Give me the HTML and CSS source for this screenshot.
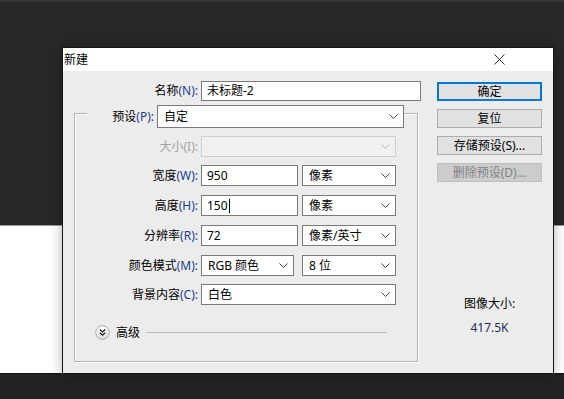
FILE: index.html
```html
<!DOCTYPE html>
<html lang="zh-CN">
<head>
    <meta charset="UTF-8">
    <title>新建</title>
    <link rel="stylesheet" href="styles.css">
</head>
<body>
    <!-- Photoshop workspace behind the dialog -->
    <div class="app-top"></div>
    <div class="workspace"></div>
    <div class="canvas-doc"></div>
    <div class="app-bottom"></div>

    <div class="dialog">
        <div class="title-bar">
            <span class="title">新建</span>
            <svg class="close" width="11" height="11" viewBox="0 0 11 11">
                <path d="M0.5 0.5 L10.5 10.5 M10.5 0.5 L0.5 10.5" stroke="#333" stroke-width="1" fill="none"/>
            </svg>
        </div>

        <div class="dialog-body">
            <div class="main">
                <div class="row name-row">
                    <span class="label">名称<span class="key">(N):</span></span>
                    <div class="field text w-name">未标题-2</div>
                </div>

                <div class="group">
                    <div class="preset-row">
                        <span class="label">预设<span class="key">(P):</span></span>
                        <div class="field select w-preset">
                            <span>自定</span>
                            <svg class="arrow" width="9" height="5" viewBox="0 0 9 5"><path d="M0.5 0.5 L4.5 4.5 L8.5 0.5" fill="none" stroke="#444"/></svg>
                        </div>
                    </div>

                    <div class="row g-row gap8 disabled">
                        <span class="label">大小<span class="key">(I):</span></span>
                        <div class="field select w-full">
                            <span></span>
                            <svg class="arrow" width="9" height="5" viewBox="0 0 9 5"><path d="M0.5 0.5 L4.5 4.5 L8.5 0.5" fill="none" stroke="#bbb"/></svg>
                        </div>
                    </div>

                    <div class="row g-row gap8">
                        <span class="label">宽度<span class="key">(W):</span></span>
                        <div class="field text w-num">950</div>
                        <div class="field select w-unit">
                            <span>像素</span>
                            <svg class="arrow" width="9" height="5" viewBox="0 0 9 5"><path d="M0.5 0.5 L4.5 4.5 L8.5 0.5" fill="none" stroke="#444"/></svg>
                        </div>
                    </div>

                    <div class="row g-row gap9">
                        <span class="label">高度<span class="key">(H):</span></span>
                        <div class="field text w-num">150<span class="caret"></span></div>
                        <div class="field select w-unit">
                            <span>像素</span>
                            <svg class="arrow" width="9" height="5" viewBox="0 0 9 5"><path d="M0.5 0.5 L4.5 4.5 L8.5 0.5" fill="none" stroke="#444"/></svg>
                        </div>
                    </div>

                    <div class="row g-row gap9">
                        <span class="label">分辨率<span class="key">(R):</span></span>
                        <div class="field text w-num">72</div>
                        <div class="field select w-unit">
                            <span>像素/英寸</span>
                            <svg class="arrow" width="9" height="5" viewBox="0 0 9 5"><path d="M0.5 0.5 L4.5 4.5 L8.5 0.5" fill="none" stroke="#444"/></svg>
                        </div>
                    </div>

                    <div class="row g-row gap9">
                        <span class="label">颜色模式<span class="key">(M):</span></span>
                        <div class="field select w-mode">
                            <span>RGB 颜色</span>
                            <svg class="arrow" width="9" height="5" viewBox="0 0 9 5"><path d="M0.5 0.5 L4.5 4.5 L8.5 0.5" fill="none" stroke="#444"/></svg>
                        </div>
                        <div class="field select w-unit">
                            <span>8 位</span>
                            <svg class="arrow" width="9" height="5" viewBox="0 0 9 5"><path d="M0.5 0.5 L4.5 4.5 L8.5 0.5" fill="none" stroke="#444"/></svg>
                        </div>
                    </div>

                    <div class="row g-row gap8">
                        <span class="label">背景内容<span class="key">(C):</span></span>
                        <div class="field select w-full">
                            <span>白色</span>
                            <svg class="arrow" width="9" height="5" viewBox="0 0 9 5"><path d="M0.5 0.5 L4.5 4.5 L8.5 0.5" fill="none" stroke="#444"/></svg>
                        </div>
                    </div>

                    <div class="advanced">
                        <svg class="adv-btn" width="15" height="15" viewBox="0 0 15 15">
                            <defs>
                                <linearGradient id="advGrad" x1="0" y1="0" x2="0" y2="1">
                                    <stop offset="0" stop-color="#ffffff"/>
                                    <stop offset="1" stop-color="#dcdcdc"/>
                                </linearGradient>
                            </defs>
                            <circle cx="7.5" cy="7.5" r="6.8" fill="url(#advGrad)" stroke="#a8a8a8"/>
                            <path d="M4.8 4.6 L7.5 7 L10.2 4.6 M4.8 7.8 L7.5 10.2 L10.2 7.8" fill="none" stroke="#222" stroke-width="1.3"/>
                        </svg>
                        <span class="adv-text">高级</span>
                        <div class="adv-line"></div>
                    </div>
                </div>
            </div>

            <div class="side">
                <button class="btn default">确定</button>
                <button class="btn">复位</button>
                <button class="btn">存储预设(S)...</button>
                <button class="btn" disabled>删除预设(D)...</button>

                <div class="size-label">图像大小:</div>
                <div class="size-value">417.5K</div>
            </div>
        </div>
    </div>
</body>
</html>
```

FILE: styles.css
```css
* {
    margin: 0;
    padding: 0;
    box-sizing: border-box;
}

body {
    width: 564px;
    height: 399px;
    overflow: hidden;
    background: #232323;
    font-family: "Noto Sans", "Noto Sans CJK SC", sans-serif;
    font-size: 12px;
    color: #000;
}

/* workspace backdrop */
.app-top {
    height: 2px;
    background: #383838;
}

.workspace {
    height: 223px;
    background: #282828;
}

.canvas-doc {
    height: 149px;
    background: #fff;
    border-top: 1px solid #9a9a9a;
    border-bottom: 1px solid #111;
}

.app-bottom {
    height: 25px;
    background: #232323;
}

/* dialog window */
.dialog {
    position: absolute;
    left: 62px;
    top: 47px;
    width: 492px;
    height: 327px;
    border: 1px solid #151515;
    background: #ececec;
    box-shadow: 0 0 12px rgba(0, 0, 0, 0.3);
}

.title-bar {
    height: 23px;
    background: #fff;
    display: flex;
    align-items: center;
    justify-content: space-between;
    padding-left: 1px;
    padding-right: 48px;
}

.title {
    font-size: 12px;
    line-height: 16px;
}

.dialog-body {
    display: flex;
    padding: 10px 0 0 11px;
}

.main {
    width: 347px;
}

.row {
    display: flex;
    align-items: center;
    height: 21px;
}

.label {
    flex: none;
    text-align: right;
    white-space: nowrap;
    line-height: 16px;
}

.key {
    color: #1d3d8c;
}

.name-row {
    height: 20px;
}

.name-row .label {
    width: 124px;
    margin-right: 3px;
}

.field {
    height: 100%;
    background: #fff;
    border: 1px solid #7a7a7a;
    display: flex;
    align-items: center;
    line-height: 16px;
    white-space: nowrap;
}

.field.text {
    padding-left: 5px;
}

.field.select {
    justify-content: space-between;
    padding: 0 5px 0 6px;
}

.arrow {
    flex: none;
}

.caret {
    display: inline-block;
    width: 1px;
    height: 14px;
    background: #000;
    margin-left: 1px;
}

.w-name { width: 221px; }
.w-preset { width: 247px; }
.w-full { width: 195px; }
.w-num { width: 97px; margin-right: 4px; }
.w-unit { width: 94px; }
.w-mode { width: 93px; margin-right: 8px; }

/* group box */
.group {
    margin-top: 12px;
    width: 344px;
    height: 249px;
    border: 1px solid #b4b4b4;
    box-shadow: inset 1px 1px 0 #fff, 1px 1px 0 #fff;
}

.preset-row {
    display: flex;
    align-items: center;
    height: 23px;
    width: 317px;
    margin: -9px 0 0 12px;
    background: #ececec;
}

.preset-row .label {
    width: 67px;
    margin-right: 3px;
}

.g-row .label {
    width: 123px;
    margin-right: 3px;
}

.gap8 { margin-top: 8px; }
.gap9 { margin-top: 9px; }

.disabled .label,
.disabled .key {
    color: #a2a2a2;
}

.disabled .field {
    background: #f0f0f0;
    border-color: #cfcfcf;
}

.advanced {
    display: flex;
    align-items: center;
    margin: 20px 0 0 20px;
    height: 15px;
}

.adv-text {
    margin-left: 6px;
    line-height: 16px;
}

.adv-line {
    margin-left: 6px;
    width: 241px;
    height: 1px;
    background: #b9b9b9;
}

/* buttons column */
.side {
    margin-left: 16px;
    width: 105px;
    display: flex;
    flex-direction: column;
    padding-top: 1px;
}

.btn {
    height: 19px;
    margin-bottom: 8px;
    background: #e1e1e1;
    border: 1px solid #adadad;
    font-family: inherit;
    font-size: 12px;
    line-height: 15px;
    color: #000;
}

.btn.default {
    border-color: #0078d7;
    box-shadow: inset 0 0 0 1px #0078d7;
}

.btn:disabled {
    background: #cccccc;
    border-color: #bfbfbf;
    color: #838383;
}

.size-label {
    margin-top: 106px;
    text-align: center;
    line-height: 16px;
}

.size-value {
    margin-top: 8px;
    text-align: center;
    line-height: 16px;
    color: #1f2a5c;
}
```
